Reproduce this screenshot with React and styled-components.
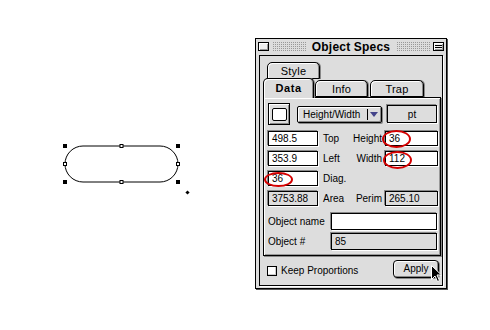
import React from 'react'
import styled, { createGlobalStyle } from 'styled-components'

const GlobalStyle = createGlobalStyle`
  html, body {
    margin: 0;
    padding: 0;
    background: #fff;
  }
  body {
    font-family: "Liberation Sans", Arial, sans-serif;
    font-size: 10px;
    color: #000;
  }
`

const Page = styled.div`
  display: flex;
  width: 490px;
  height: 330px;
`

const Canvas = styled.div`
  width: 255px;
  height: 330px;
  flex: none;
`

const Window = styled.div`
  margin-top: 38px;
  width: 192px;
  height: 251px;
  box-sizing: border-box;
  border: 1px solid #000;
  background: #ddd;
  box-shadow: 1px 1px 0 #555;
  display: flex;
  flex-direction: column;
`

const TitleBar = styled.div`
  height: 15px;
  display: flex;
  align-items: center;
  gap: 3px;
  padding: 0 2px;
`

const TitleBox = styled.div`
  width: 7px;
  height: 7px;
  flex: none;
  border: 1px solid #000;
  background: #eee;
  box-shadow: inset 1px 1px 0 #fff, inset -1px -1px 0 #999;
  display: flex;
  flex-direction: column;
  justify-content: center;
  gap: 1px;
  padding: 0 1px;
  box-sizing: content-box;

  span {
    display: ${p => (p.$lines ? 'block' : 'none')};
    height: 1px;
    background: #000;
  }
`

const Stripes = styled.div`
  flex: 1;
  height: 9px;
  background-image:
    linear-gradient(90deg, #ddd 1px, transparent 1px),
    repeating-linear-gradient(#999 0 1px, transparent 1px 2px);
  background-size: 2px 2px, 2px 2px;
`

const Title = styled.div`
  font-weight: bold;
  font-size: 12px;
  letter-spacing: 0.2px;
  padding: 0 3px;
`

const Frame = styled.div`
  flex: 1;
  margin: 1px 3px 2px 3px;
  border: 1px solid #000;
  box-shadow: 1px 1px 0 #fff;
  display: flex;
  flex-direction: column;
  padding: 6px 1px 0 3px;
`

const BackRow = styled.div`
  display: flex;
  padding-left: 4px;
  height: 16px;
`

const FrontRow = styled.div`
  display: flex;
  align-items: flex-end;
  height: 19px;
  position: relative;
  z-index: 1;
`

const Tab = styled.div`
  box-sizing: border-box;
  width: ${p => p.$w}px;
  height: ${p => (p.$active ? 20 : 17)}px;
  margin-right: ${p => p.$gap || 0}px;
  margin-bottom: ${p => (p.$active ? -1 : 0)}px;
  border: 1px solid #000;
  border-bottom: ${p => (p.$active ? 'none' : '1px solid #000')};
  border-radius: 5px 5px 0 0;
  background: #ddd;
  box-shadow: inset 1px 1px 0 #fff, inset -1px 0 0 #888, 1px 0 0 #888;
  display: flex;
  justify-content: center;
  align-items: center;
  font-size: 11px;
  font-weight: ${p => (p.$active ? 'bold' : 'normal')};
  letter-spacing: ${p => (p.$active ? '0.6px' : '0.2px')};
  padding-bottom: ${p => (p.$active ? 2 : 0)}px;
`

const Panel = styled.div`
  box-sizing: border-box;
  width: 178px;
  height: 159px;
  border: 1px solid #000;
  background: #ddd;
  box-shadow: inset 1px 1px 0 #fff, inset -1px -1px 0 #999, 1px 1px 0 #888;
  padding: 5px 2px 6px 4px;
  display: flex;
  flex-direction: column;
`

const TopRow = styled.div`
  display: flex;
  align-items: center;
  height: 22px;
  margin-bottom: 6px;
`

const ColorWell = styled.div`
  box-sizing: border-box;
  width: 22px;
  height: 22px;
  border: 1px solid #000;
  background: #ddd;
  box-shadow: inset 1px 1px 0 #fff, inset -1px -1px 0 #888;
  display: flex;
  align-items: center;
  justify-content: center;
  margin-right: 7px;

  span {
    width: 13px;
    height: 11px;
    border: 1px solid #000;
    border-radius: 2px;
    background: #fff;
  }
`

const Popup = styled.div`
  box-sizing: border-box;
  width: 85px;
  height: 17px;
  border: 1px solid #000;
  border-radius: 2px;
  background: #ddd;
  box-shadow: inset 1px 1px 0 #fff, inset -1px -1px 0 #888, 1px 1px 0 #888;
  display: flex;
  align-items: center;
  padding-left: 5px;
  margin-right: 5px;
  font-size: 10px;

  b {
    font-weight: normal;
    flex: 1;
  }
  i {
    width: 1px;
    height: 11px;
    background: #000;
    margin-right: 2px;
  }
`

const Arrow = styled.span`
  width: 0;
  height: 0;
  border-left: 4px solid transparent;
  border-right: 4px solid transparent;
  border-top: 5px solid #44448a;
  margin-right: 3px;
`

const Field = styled.div`
  position: relative;
  box-sizing: border-box;
  width: ${p => p.$w}px;
  height: ${p => p.$h || 15}px;
  border: 1px solid #000;
  background: ${p => (p.$gray ? '#ddd' : '#fff')};
  box-shadow: -1px -1px 0 #888, 1px 1px 0 #fff;
  display: flex;
  align-items: center;
  justify-content: ${p => (p.$center ? 'center' : 'flex-start')};
  padding-left: ${p => (p.$center ? 0 : 3)}px;
  font-size: 10px;
`

const Grid = styled.div`
  display: grid;
  grid-template-columns: 50px 1fr auto 53px;
  grid-auto-rows: 15px;
  row-gap: 5px;
  align-items: center;
`

const Label = styled.div`
  font-size: 10px;
  margin-left: ${p => p.$ml || 0}px;
  margin-right: ${p => p.$mr || 0}px;
  text-align: ${p => (p.$right ? 'right' : 'left')};
`

const NameRow = styled.div`
  display: flex;
  align-items: center;
  justify-content: space-between;
  margin-top: ${p => p.$mt}px;
  padding-right: 1px;
`

const Mark = styled.span`
  position: absolute;
  left: ${p => p.$x}px;
  top: ${p => p.$y}px;
  width: ${p => p.$w}px;
  height: ${p => p.$h}px;
  border: 2px solid #d40000;
  border-radius: 50%;
  box-sizing: border-box;
  pointer-events: none;
`

const Bottom = styled.div`
  flex: 1;
  display: flex;
  align-items: center;
  justify-content: space-between;
  padding: 0 2px 0 4px;
  position: relative;
`

const Check = styled.label`
  display: flex;
  align-items: center;
  gap: 4px;
  font-size: 10px;

  span {
    width: 10px;
    height: 10px;
    box-sizing: border-box;
    border: 1px solid #000;
    background: #fff;
    box-shadow: inset -1px -1px 0 #ccc;
  }
`

const Button = styled.div`
  box-sizing: border-box;
  width: 46px;
  height: 18px;
  border: 1px solid #000;
  border-radius: 4px;
  background: #ddd;
  box-shadow: inset 1px 1px 0 #fff, inset -1px -1px 0 #888, 1px 1px 0 #888;
  display: flex;
  align-items: center;
  justify-content: center;
  font-size: 10px;
  margin-top: -4px;
  position: relative;
`

const Cursor = styled.svg`
  position: absolute;
  left: 37px;
  top: 4px;
`

function Shape() {
  const corner = [[65, 146], [178, 146], [65, 182], [178, 182]]
  const mid = [[121.5, 146], [121.5, 182], [65, 164], [178, 164]]
  return (
    <svg width="255" height="330">
      <rect x="65" y="146" width="113" height="36" rx="18" fill="none" stroke="#000" strokeWidth="1" />
      {corner.map(([x, y], i) => (
        <rect key={i} x={x - 2} y={y - 2} width="4" height="4" fill="#000" />
      ))}
      {mid.map(([x, y], i) => (
        <rect key={i} x={x - 1.5} y={y - 1.5} width="3" height="3" fill="#fff" stroke="#000" strokeWidth="1" />
      ))}
      <rect x="186" y="191" width="3" height="3" fill="#000" transform="rotate(45 187.5 192.5)" />
    </svg>
  )
}

export default function App() {
  return (
    <>
      <GlobalStyle />
      <Page>
        <Canvas>
          <Shape />
        </Canvas>
        <Window>
          <TitleBar>
            <TitleBox />
            <Stripes />
            <Title>Object Specs</Title>
            <Stripes />
            <TitleBox $lines>
              <span />
              <span />
            </TitleBox>
          </TitleBar>
          <Frame>
            <BackRow>
              <Tab $w={53}>Style</Tab>
            </BackRow>
            <FrontRow>
              <Tab $w={51} $gap={1} $active>Data</Tab>
              <Tab $w={53} $gap={2}>Info</Tab>
              <Tab $w={54}>Trap</Tab>
            </FrontRow>
            <Panel>
              <TopRow>
                <ColorWell><span /></ColorWell>
                <Popup>
                  <b>Height/Width</b>
                  <i />
                  <Arrow />
                </Popup>
                <Field $w={50} $h={18} $gray $center>pt</Field>
              </TopRow>
              <Grid>
                <Field $w={50}>498.5</Field>
                <Label $ml={5}>Top</Label>
                <Label $right $mr={3}>Height</Label>
                <Field $w={53}>36<Mark $x={-4} $y={-2} $w={29} $h={18} /></Field>

                <Field $w={50}>353.9</Field>
                <Label $ml={5}>Left</Label>
                <Label $right $mr={3}>Width</Label>
                <Field $w={53}>112<Mark $x={-3} $y={-1} $w={29} $h={18} /></Field>

                <Field $w={50}>36<Mark $x={-5} $y={0} $w={29} $h={15} /></Field>
                <Label $ml={5}>Diag.</Label>
                <Label />
                <div />

                <Field $w={50} $gray>3753.88</Field>
                <Label $ml={5}>Area</Label>
                <Label $right $mr={3}>Perim</Label>
                <Field $w={53} $gray>265.10</Field>
              </Grid>
              <NameRow $mt={7}>
                <Label>Object name</Label>
                <Field $w={106} $h={17} />
              </NameRow>
              <NameRow $mt={3}>
                <Label>Object #</Label>
                <Field $w={106} $h={17} $gray>85</Field>
              </NameRow>
            </Panel>
            <Bottom>
              <Check>
                <span />
                Keep Proportions
              </Check>
              <Button>
                Apply
                <Cursor width="12" height="18" viewBox="0 0 12 18">
                  <path d="M0.5 0.5 L0.5 14.5 L4 11 L6.5 16.5 L8.5 15.5 L6 10 L10.5 10 Z" fill="#000" stroke="#fff" strokeWidth="1" />
                </Cursor>
              </Button>
            </Bottom>
          </Frame>
        </Window>
      </Page>
    </>
  )
}
